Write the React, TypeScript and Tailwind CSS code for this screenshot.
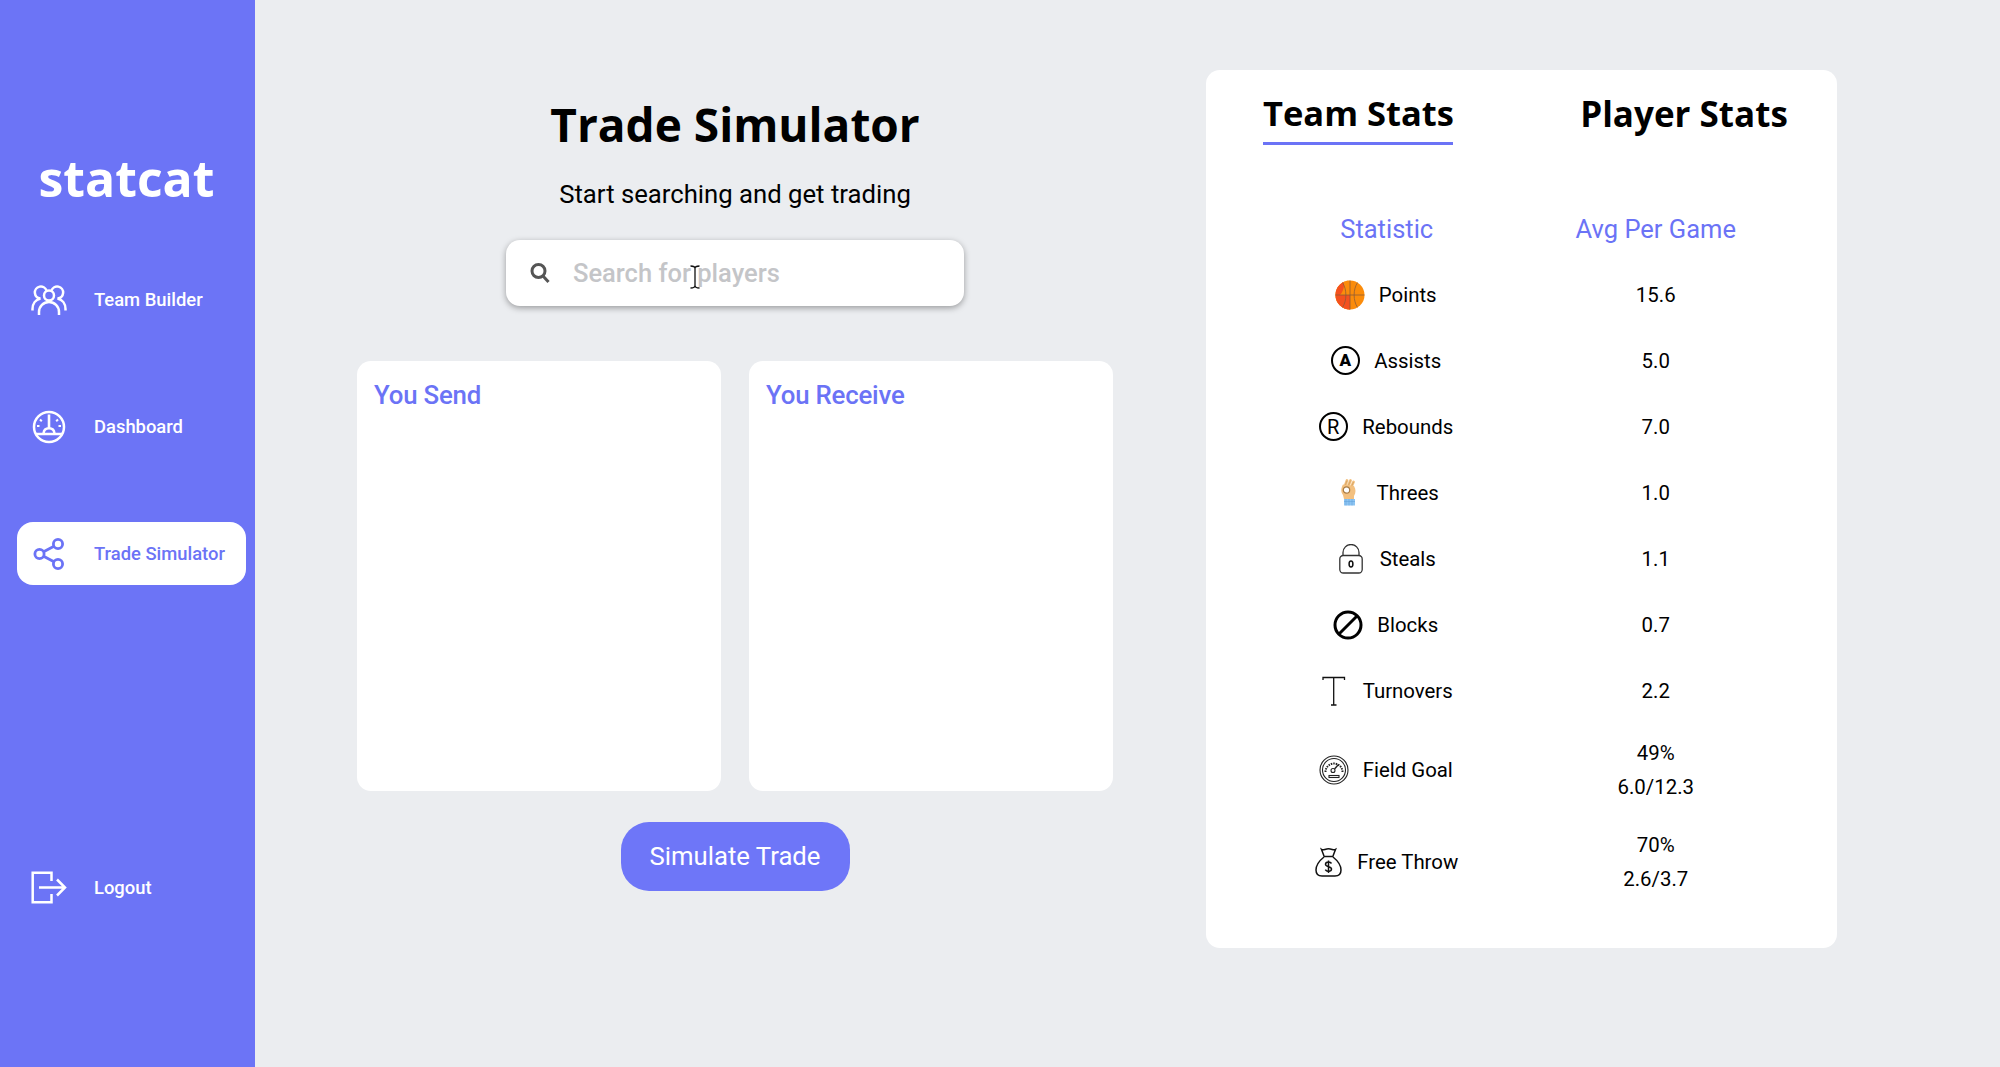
import { ReactNode } from "react"

const roboto = "font-['Roboto',sans-serif]"
const heading = "font-['Open_Sans',sans-serif]"

function TeamIcon() {
  return (
    <svg width="36" height="32" viewBox="0 0 36 32" fill="none" stroke="currentColor" strokeWidth="2.5">
      <circle cx="18" cy="11.500" r="5" />
      <path d="M8 31v-3a10 10 0 0 1 20 0v3" />
      <path d="M15.500 6.500A6 6 0 1 0 9.500 14.500C4.500 15.600 1.500 20 1.500 25v1.500" />
      <path d="M20.500 6.500A6 6 0 1 1 26.500 14.500c5 1.100 8 5.500 8 10.500v1.500" />
    </svg>
  )
}

function DashIcon() {
  return (
    <svg width="34" height="34" viewBox="0 0 34 34" fill="none" stroke="currentColor" strokeWidth="2.500">
      <circle cx="17" cy="17" r="15" />
      <path d="M8 9.500l1.800 1.800M26 9.500l-1.800 1.800M5 16h2.500M29 16h-2.500" strokeWidth="2" />
      <path d="M17 4.500v14" strokeWidth="2.600" />
      <path d="M11.500 23.500c.3-3.200 2.500-5.200 5.500-5.200s5.200 2 5.500 5.200" />
      <path d="M3.500 24h27" />
    </svg>
  )
}

function ShareIcon() {
  return (
    <svg width="32" height="34" viewBox="0 0 32 34" fill="none" stroke="currentColor" strokeWidth="2.800">
      <circle cx="25" cy="7" r="4.600" />
      <circle cx="6.500" cy="17" r="4.600" />
      <circle cx="25" cy="27" r="4.600" />
      <path d="M10.600 14.800 21 9.200M10.600 19.200 21 24.800" />
    </svg>
  )
}

function LogoutIcon() {
  return (
    <svg width="36" height="33" viewBox="0 0 36 33" fill="none" stroke="currentColor" strokeWidth="2.500">
      <path d="M20.500 10V1.700H1.700v29.600h18.800V23" />
      <path d="M8 16.500h26M26 8.500l8 8-8 8" />
    </svg>
  )
}

function NavItem({ icon, label, active }: { icon: ReactNode; label: string; active?: boolean }) {
  return (
    <div
      className={`flex h-[63px] w-[229px] items-center rounded-[16px] ${active ? "bg-white text-[#6b73f6]" : "text-white"}`}
    >
      <div className="flex w-[63px] justify-center">{icon}</div>
      <span className={`ml-[14px] text-[18.400px] font-medium ${roboto}`}>{label}</span>
    </div>
  )
}

function Ball() {
  return (
    <svg width="30" height="30" viewBox="0 0 30 30" fill="none">
      <circle cx="15" cy="15" r="14.500" fill="#fb8c0b" />
      <path d="M15 .5A14.500 14.500 0 0 0 15 29.500L15 15H3C8 12 10 6 8.500 2Z" fill="#fb8c0b" />
      <path d="M.5 15A14.500 14.500 0 0 0 15 29.500V15ZM8.500 2A14.500 14.500 0 0 0 .5 15H5C8 12 10 6 8.500 2Z" fill="#f4511e" />
      <path d="M15 .5v29M.5 15h29M7.500 2.500c4.500 7 4.500 18 0 25M22.500 2.500c-4.500 7-4.500 18 0 25" stroke="#8a5a3a" strokeWidth="1" strokeOpacity=".75" />
    </svg>
  )
}

function LetterCircle({ letter, bold }: { letter: string; bold?: boolean }) {
  return (
    <div
      className={`flex h-[29px] w-[29px] items-center justify-center rounded-full border-2 border-black leading-none text-black ${roboto} ${bold ? "text-[17px] font-black" : "text-[20px] font-normal"}`}
    >
      {letter}
    </div>
  )
}

function OkHand() {
  return (
    <svg width="16" height="27" viewBox="0 0 16 27" fill="none">
      <path d="M5 7 7 1.500M8 7.500 10.500 1.500M11 8.500 13.500 3" stroke="#f3c07f" strokeWidth="2.800" strokeLinecap="round" />
      <path d="M5 7 7 1.500M8 7.500 10.500 1.500M11 8.500 13.500 3" stroke="#b98a4e" strokeWidth=".5" />
      <path d="M3 5.500C1 9 .5 13 3 16l1 4h10v-3c2-3 2-7 0-10L8 6Z" fill="#f3c07f" />
      <circle cx="6.500" cy="11" r="3.200" fill="#fff" stroke="#a97b42" strokeWidth="1.200" />
      <rect x="4" y="20" width="11" height="6.500" fill="#8cc4f2" />
      <path d="M4 22.500h11M6 20v6.500M9 20v6.500M12 20v6.500" stroke="#5d9fd8" strokeWidth=".5" />
    </svg>
  )
}

function Lock() {
  return (
    <svg width="24" height="30" viewBox="0 0 24 30" fill="none" stroke="#333" strokeWidth="1.300">
      <path d="M4 12V8.500a8 8 0 0 1 16 0V12" />
      <rect x=".8" y="11.500" width="22.400" height="17.500" rx="3.500" />
      <ellipse cx="12" cy="20" rx="1.900" ry="3" strokeWidth="1.500" stroke="#111" />
    </svg>
  )
}

function Block() {
  return (
    <svg width="30" height="30" viewBox="0 0 30 30" fill="none" stroke="#000" strokeWidth="3">
      <circle cx="15" cy="15" r="13" />
      <path d="M6 24 24 6" />
    </svg>
  )
}

function TBar() {
  return (
    <svg width="24" height="30" viewBox="0 0 24 30" fill="none" stroke="#111" strokeWidth="1.300">
      <path d="M1 4V1.500h21.500V4M11.700 1.500V29M9 29h5.500" />
    </svg>
  )
}

function Gauge() {
  return (
    <svg width="30" height="30" viewBox="0 0 30 30" fill="none" stroke="#222" strokeWidth="1.100">
      <circle cx="15" cy="15" r="14" />
      <circle cx="15" cy="15" r="11.500" />
      <path d="M6.500 17a8.500 8.500 0 0 1 17 0" strokeWidth="2" strokeDasharray="1.500 1" />
      <circle cx="14" cy="15.500" r="2" />
      <path d="m15.500 14 4-4.500" strokeWidth="1.400" />
      <rect x="10" y="20.500" width="10" height="2" />
    </svg>
  )
}

function MoneyBag() {
  return (
    <svg width="27" height="30" viewBox="0 0 27 30" fill="none" stroke="#111" strokeWidth="1.500">
      <path d="M9 9 6.500 2.500c2 1.300 3.500-.8 7-.8s5 2 7 .8L18 9" />
      <path d="M8.500 9.500h10" />
      <path d="M9 10C4 14 1 19 1 23c0 4 2 6 6 6h13c4 0 6-2 6-6 0-4-3-9-8-13" />
      <path d="M16.500 16.500c-.6-1-1.700-1.500-3-1.500-1.800 0-3 .9-3 2.300 0 3.200 6 1.600 6 4.800 0 1.400-1.300 2.300-3 2.300-1.400 0-2.600-.6-3.200-1.700M13.500 13.500v12.500" />
    </svg>
  )
}

const stats: { icon: ReactNode; name: string; value: string[] }[] = [
  { icon: <Ball />, name: "Points", value: ["15.6"] },
  { icon: <LetterCircle letter="A" bold />, name: "Assists", value: ["5.0"] },
  { icon: <LetterCircle letter="R" />, name: "Rebounds", value: ["7.0"] },
  { icon: <OkHand />, name: "Threes", value: ["1.0"] },
  { icon: <Lock />, name: "Steals", value: ["1.1"] },
  { icon: <Block />, name: "Blocks", value: ["0.7"] },
  { icon: <TBar />, name: "Turnovers", value: ["2.2"] },
  { icon: <Gauge />, name: "Field Goal", value: ["49%", "6.0/12.3"] },
  { icon: <MoneyBag />, name: "Free Throw", value: ["70%", "2.6/3.7"] },
]

function TradeCard({ title }: { title: string }) {
  return (
    <div className="h-[430px] w-[364px] rounded-[14px] bg-white px-[17px] py-[17px]">
      <h3 className={`text-[25.800px] leading-[35px] font-medium tracking-[-0.2px] text-[#6b73f6] ${roboto}`}>{title}</h3>
    </div>
  )
}

export default function App() {
  return (
    <div className="flex h-[1067px] w-[2000px] overflow-hidden bg-[#ebedf0]">
      <aside className="flex h-full w-[255px] shrink-0 flex-col bg-[#6c74f6] pl-[17px]">
        <div className={`mt-[148px] w-[219px] text-center text-[50px] leading-[60px] font-bold text-white ${heading}`}>
          statcat
        </div>
        <div className="mt-[60px] flex flex-col gap-[64px]">
          <NavItem icon={<TeamIcon />} label="Team Builder" />
          <NavItem icon={<DashIcon />} label="Dashboard" />
          <NavItem icon={<ShareIcon />} label="Trade Simulator" active />
        </div>
        <div className="mt-[271px]">
          <NavItem icon={<LogoutIcon />} label="Logout" />
        </div>
      </aside>

      <main className="ml-[102px] flex w-[756px] shrink-0 flex-col items-center">
        <h1 className={`mt-[92px] text-[46px] leading-[64px] font-bold text-black ${heading}`}>Trade Simulator</h1>
        <p className={`mt-[21px] text-[25.700px] leading-[34px] text-black ${roboto}`}>Start searching and get trading</p>
        <div className="relative mt-[29px] flex h-[66px] w-[458px] items-center rounded-[14px] bg-white pl-[24px] shadow-[0_2px_6px_rgba(0,0,0,0.35)]">
          <svg width="20" height="22" viewBox="0 0 20 22" fill="none" stroke="#555" strokeWidth="3">
            <circle cx="8.500" cy="9" r="6.500" />
            <path d="m13 14 5.500 6" />
          </svg>
          <input
            readOnly
            placeholder="Search for players"
            className={`ml-[23px] w-[340px] bg-transparent text-[25.500px] font-medium outline-none placeholder:text-[#c4c5c8] ${roboto}`}
          />
          {/* mouse cursor sitting on the field */}
          <svg className="absolute top-[25px] left-[183px]" width="12" height="24" viewBox="0 0 12 24" fill="none" stroke="#111" strokeWidth="1.300">
            <path d="M1.500 1c2 0 4.500.5 4.500 2.500v17C6 22.500 3.500 23 1.500 23M10.500 1C8.500 1 6 1.500 6 3.500v17c0 2 2.500 2.500 4.500 2.500" />
          </svg>
        </div>
        <div className="mt-[55px] flex gap-[28px]">
          <TradeCard title="You Send" />
          <TradeCard title="You Receive" />
        </div>
        <button className={`mt-[31px] h-[69px] w-[229px] rounded-[28px] bg-[#6e76f8] text-[25.700px] text-white ${roboto}`}>
          Simulate Trade
        </button>
      </main>

      <section className="mt-[70px] ml-[93px] h-[878px] w-[631px] shrink-0 rounded-[14px] bg-white px-[46px]">
        <div className="-mx-[46px] flex pt-[20px]">
          <div className={`ml-[57px] h-[55px] w-[190px] border-b-[3px] border-[#6b73f6] text-center text-[34.500px] leading-[46px] font-bold whitespace-nowrap text-black ${heading}`}>
            Team Stats
          </div>
          <div className={`ml-[127px] w-[208px] text-center text-[35px] leading-[48px] font-bold whitespace-nowrap text-black ${heading}`}>
            Player Stats
          </div>
        </div>
        <div className={`mt-[51px] grid h-[66px] grid-cols-2 items-center text-center text-[25.500px] font-normal text-[#6b73f6] ${roboto}`}>
          <div>Statistic</div>
          <div className="pr-[1px]">Avg Per Game</div>
        </div>
        {stats.map((s) => (
          <div
            key={s.name}
            className={`grid grid-cols-2 items-center text-center text-[20.400px] text-black ${roboto} ${s.value.length > 1 ? "h-[92px]" : "h-[66px]"}`}
          >
            <div className="flex items-center justify-center gap-[14px] pr-[2px]">
              <div className="flex w-[30px] justify-center">{s.icon}</div>
              <span>{s.name}</span>
            </div>
            <div className="pr-[1px] leading-[34px]">
              {s.value.map((v) => (
                <div key={v}>{v}</div>
              ))}
            </div>
          </div>
        ))}
      </section>
    </div>
  )
}
